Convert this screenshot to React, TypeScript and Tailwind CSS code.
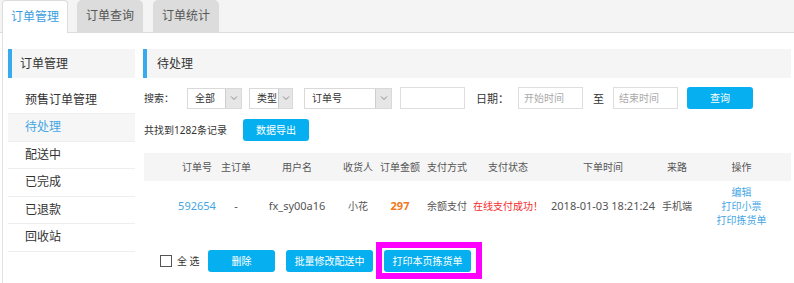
import React from "react";

const Chevron = () => (
  <svg width="8" height="6" viewBox="0 0 8 6" fill="none">
    <path d="M1 1.5 L4 4.5 L7 1.5" stroke="#8a8a8a" strokeWidth="1" />
  </svg>
);

function Select({ w, label, aw }: { w: string; label: string; aw: string }) {
  return (
    <div className={`${w} h-[21px] flex border border-[#d9d9d9] bg-white`}>
      <div className="flex-1 pl-[7px] flex items-center text-[10px] text-[#333]">{label}</div>
      <div className={`${aw} h-full bg-[#e6e6e6] border-l border-[#cdcdcd] flex items-center justify-center`}>
        <Chevron />
      </div>
    </div>
  );
}

function Input({ ph }: { ph?: string }) {
  return (
    <div className="w-[65px] h-[22px] border border-[#dedede] bg-white flex items-center pl-[5px] text-[10px] text-[#aaa]">
      {ph}
    </div>
  );
}

const Btn = ({ w, children }: { w: string; children: React.ReactNode }) => (
  <div className={`${w} h-[22px] bg-[#06aff0] rounded-[3px] text-white text-[10px] flex items-center justify-center`}>
    {children}
  </div>
);

const cols = "grid grid-cols-[34px_38px_40px_82px_40px_44px_50px_72px_118px_30px_1fr]";

export default function App() {
  const menu = ["预售订单管理", "待处理", "配送中", "已完成", "已退款", "回收站"];
  return (
    <div className="w-[794px] h-[283px] bg-white overflow-hidden font-['Noto_Sans','Noto_Sans_CJK_SC',sans-serif] text-[#444] leading-none">
      {/* tabs */}
      <div className="h-[33px] bg-[#f4f4f4] border-b border-[#dcdcdc] flex items-start pl-[2px] gap-[9px]">
        <div className="w-[66px] h-[33px] bg-white border border-b-0 border-[#dcdcdc] rounded-t-[4px] flex items-center justify-center text-[12px] text-[#3a9de0]">
          订单管理
        </div>
        <div className="w-[66px] h-[32px] bg-[#dcdcdc] rounded-t-[5px] flex items-center justify-center text-[12px] text-[#555]">
          订单查询
        </div>
        <div className="w-[66px] h-[32px] bg-[#dcdcdc] rounded-t-[5px] flex items-center justify-center text-[12px] text-[#555] ml-px">
          订单统计
        </div>
      </div>

      {/* body */}
      <div className="ml-[2px] border-l border-[#e2e2e2] h-[250px] flex pl-[5px] pt-[16px] gap-[8px]">
        {/* sidebar */}
        <div className="w-[127px] flex flex-col">
          <div className="h-[29px] bg-[#f5f5f5] border-l-4 border-[#3aaaee] pl-[8px] flex items-center text-[12px] text-[#333]">
            订单管理
          </div>
          <div className="mt-[8px] flex flex-col">
            {menu.map((m, i) => (
              <div
                key={m}
                className={`${i === 0 ? "h-[28px]" : "h-[27.5px]"} border-b border-[#eeeeee] pl-[17px] flex items-center text-[12px] ${
                  i === 1 ? "bg-[#f6f6f6] text-[#45a6e4]" : "text-[#333]"
                }`}
              >
                {m}
              </div>
            ))}
          </div>
        </div>

        {/* main */}
        <div className="w-[648px] flex flex-col">
          <div className="h-[29px] bg-[#f5f5f5] border-l-4 border-[#3aaaee] pl-[10px] flex items-center text-[12px] text-[#333]">
            待处理
          </div>

          {/* search row */}
          <div className="mt-[9px] h-[22px] flex items-center pl-px">
            <div className="w-[43px] text-[10px] text-[#333]">搜索：</div>
            <Select w="w-[55px]" label="全部" aw="w-[16px]" />
            <div className="w-[7px]" />
            <Select w="w-[44px]" label="类型" aw="w-[14px]" />
            <div className="w-[11px]" />
            <Select w="w-[88px]" label="订单号" aw="w-[16px]" />
            <div className="w-[8px]" />
            <Input />
            <div className="w-[11px]" />
            <div className="w-[42px] text-[11px] text-[#333]">日期：</div>
            <Input ph="开始时间" />
            <div className="w-[10px]" />
            <div className="w-[20px] text-[11px] text-[#333]">至</div>
            <Input ph="结束时间" />
            <div className="w-[9px]" />
            <Btn w="w-[66px]">查询</Btn>
          </div>

          {/* record row */}
          <div className="mt-[10px] h-[22px] flex items-center pl-px">
            <div className="w-[99px] text-[10px] text-[#333]">共找到1282条记录</div>
            <Btn w="w-[66px]">数据导出</Btn>
          </div>

          {/* table */}
          <div className="mt-[12px] ml-px">
            <div className={`${cols} h-[28px] bg-[#f5f5f5] text-[10px] text-[#555]`}>
              {["", "订单号", "主订单", "用户名", "收货人", "订单金额", "支付方式", "支付状态", "下单时间", "来路", "操作"].map(
                (h, i) => (
                  <div key={i} className="flex items-center justify-center whitespace-nowrap">
                    {h}
                  </div>
                )
              )}
            </div>
            <div className={`${cols} h-[56px] text-[10px] text-[#555]`}>
              <div />
              <div className="flex items-center justify-center whitespace-nowrap text-[11px] text-[#45a6e4]">592654</div>
              <div className="flex items-center justify-center whitespace-nowrap text-[11px]">-</div>
              <div className="flex items-center justify-center whitespace-nowrap text-[11px]">fx_sy00a16</div>
              <div className="flex items-center justify-center whitespace-nowrap">小花</div>
              <div className="flex items-center justify-center whitespace-nowrap text-[11px] font-bold text-[#f07a1e]">297</div>
              <div className="flex items-center justify-center whitespace-nowrap">余额支付</div>
              <div className="flex items-center justify-center whitespace-nowrap text-[#f52a2a]">在线支付成功！</div>
              <div className="flex items-center justify-center whitespace-nowrap text-[11px]">2018-01-03 18:21:24</div>
              <div className="flex items-center justify-center whitespace-nowrap">手机端</div>
              <div className="flex flex-col items-center justify-center whitespace-nowrap text-[#45a6e4] leading-[14px]">
                <div>编辑</div>
                <div>打印小票</div>
                <div>打印拣货单</div>
              </div>
              <div />
            </div>
          </div>

          {/* bottom row */}
          <div className="mt-[5px] h-[37px] flex items-center pl-[17px]">
            <div className="w-[12px] h-[12px] border border-[#555] bg-white" />
            <div className="ml-[5px] w-[31px] text-[10px] text-[#333] whitespace-pre">全 选</div>
            <Btn w="w-[67px]">删除</Btn>
            <div className="w-[11px]" />
            <Btn w="w-[87px]">批量修改配送中</Btn>
            <div className="ml-[3px] w-[106px] h-[37px] border-[6px] border-[#ff00ff] flex items-center pl-[2px]">
              <Btn w="w-[87px]">打印本页拣货单</Btn>
            </div>
          </div>
        </div>
      </div>
    </div>
  );
}
